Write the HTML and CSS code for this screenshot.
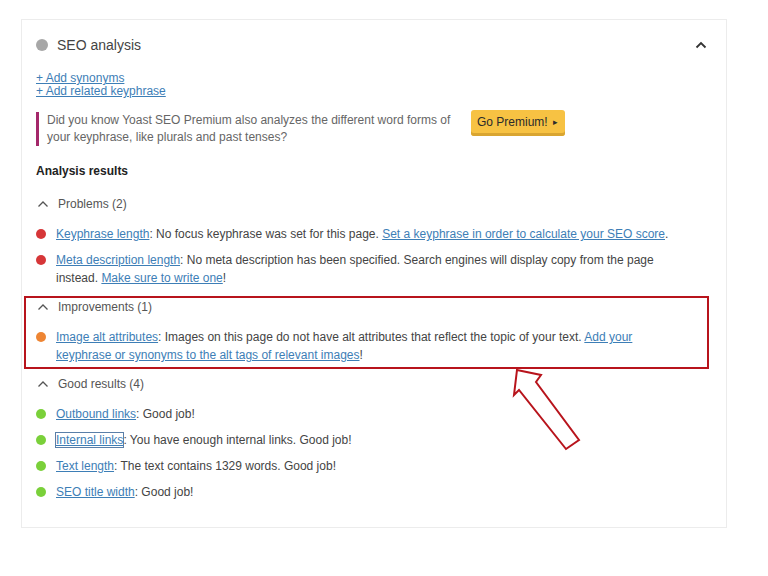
FILE: index.html
```html
<!DOCTYPE html>
<html>
<head>
<meta charset="utf-8">
<link rel="stylesheet" href="styles.css">
</head>
<body>
<div class="panel">
  <div class="panel-head">
    <span class="dot dot-grey big"></span>
    <span class="panel-title">SEO analysis</span>
    <svg class="chev-big" width="14" height="10" viewBox="0 0 14 10"><path d="M2.5 7.5 L7 3 L11.5 7.5" fill="none" stroke="#333" stroke-width="1.8"/></svg>
  </div>
  <div class="add-links">
    <a href="#">+ Add synonyms</a>
    <a href="#">+ Add related keyphrase</a>
  </div>
  <div class="upsell">
    <p class="upsell-text">Did you know Yoast SEO Premium also analyzes the different word forms of your keyphrase, like plurals and past tenses?</p>
    <span class="btn-premium">Go Premium! <span class="caret">&#9656;</span></span>
  </div>
  <h3 class="results-title">Analysis results</h3>

  <section class="group">
    <div class="group-head"><svg class="chev" width="12" height="8" viewBox="0 0 12 8"><path d="M1.5 6.5 L6 2 L10.5 6.5" fill="none" stroke="#555" stroke-width="1.3"/></svg>Problems (2)</div>
    <ul class="items">
      <li><span class="dot dot-red"></span><p><a href="#">Keyphrase length</a>: No focus keyphrase was set for this page. <a href="#">Set a keyphrase in order to calculate your SEO score</a>.</p></li>
      <li><span class="dot dot-red"></span><p><a href="#">Meta description length</a>: No meta description has been specified. Search engines will display copy from the page instead. <a href="#">Make sure to write one</a>!</p></li>
    </ul>
  </section>

  <section class="group">
    <div class="group-head"><svg class="chev" width="12" height="8" viewBox="0 0 12 8"><path d="M1.5 6.5 L6 2 L10.5 6.5" fill="none" stroke="#555" stroke-width="1.3"/></svg>Improvements (1)</div>
    <ul class="items">
      <li><span class="dot dot-orange"></span><p><a href="#">Image alt attributes</a>: Images on this page do not have alt attributes that reflect the topic of your text. <a href="#">Add your keyphrase or synonyms to the alt tags of relevant images</a>!</p></li>
    </ul>
  </section>

  <section class="group">
    <div class="group-head"><svg class="chev" width="12" height="8" viewBox="0 0 12 8"><path d="M1.5 6.5 L6 2 L10.5 6.5" fill="none" stroke="#555" stroke-width="1.3"/></svg>Good results (4)</div>
    <ul class="items">
      <li><span class="dot dot-green"></span><p><a href="#">Outbound links</a>: Good job!</p></li>
      <li><span class="dot dot-green"></span><p><a href="#" class="focused">Internal links</a>: You have enough internal links. Good job!</p></li>
      <li><span class="dot dot-green"></span><p><a href="#">Text length</a>: The text contains 1329 words. Good job!</p></li>
      <li><span class="dot dot-green"></span><p><a href="#">SEO title width</a>: Good job!</p></li>
    </ul>
  </section>
</div>

<div class="highlight"></div>
<svg class="arrow" width="768" height="576" viewBox="0 0 768 576">
  <polygon points="517,370 541,375 536,382 579,440 566,449 519,390 514,395" fill="#fff" stroke="#b8141c" stroke-width="2" stroke-linejoin="miter"/>
</svg>
</body>
</html>
```
FILE: styles.css
```css
* { box-sizing: border-box; }
html, body { margin: 0; padding: 0; background: #fff; }
body {
  font-family: "Liberation Sans", Arial, sans-serif;
  color: #444;
  font-size: 12px;
  position: relative;
  width: 768px;
  height: 576px;
  overflow: hidden;
}
a { color: #3d7eb6; text-decoration: underline; }

.panel {
  margin: 19px 0 0 21px;
  width: 706px;
  height: 509px;
  border: 1px solid #ececec;
  padding: 13px 16px 0 14px;
}
.panel-head {
  display: flex;
  align-items: center;
  height: 24px;
}
.panel-title {
  font-size: 14px;
  color: #444;
  margin-left: 9px;
  flex: 1;
}
.chev-big { margin-right: 2px; }

.dot { display: inline-block; border-radius: 50%; width: 10px; height: 10px; flex: none; }
.dot.big { width: 12px; height: 12px; margin-left: 0; }
.dot-grey { background: #a7a7a7; }
.dot-red { background: #d63638; }
.dot-orange { background: #ee8533; }
.dot-green { background: #7ad03a; }

.add-links {
  margin-top: 15px;
  display: flex;
  flex-direction: column;
  line-height: 13px;
  font-size: 12px;
}
.add-links a { width: fit-content; }

.upsell {
  margin-top: 14px;
  display: flex;
  align-items: flex-start;
  gap: 11px;
}
.upsell-text {
  margin: 0;
  border-left: 3px solid #a4286a;
  padding-left: 8px;
  width: 424px;
  line-height: 17px;
  color: #666;
}
.btn-premium {
  margin-top: -2px;
  display: inline-flex;
  align-items: center;
  gap: 5px;
  height: 26px;
  padding: 0 7px 2px 6px;
  background: #f7c243;
  border-radius: 3px;
  box-shadow: inset 0 -3px 0 #d9a531;
  color: #2b2b2b;
  font-size: 12px;
}
.caret { font-size: 9px; }

.results-title {
  margin: 16px 0 15px;
  font-size: 12px;
  line-height: 18px;
  color: #222;
  font-weight: bold;
}

.group { display: flex; flex-direction: column; gap: 12px; margin-bottom: 11px; }
.group-head {
  display: flex;
  align-items: center;
  gap: 9px;
  line-height: 18px;
  color: #555;
}
.chev { margin-left: 1px; }
.items { list-style: none; margin: 0; padding: 0; display: flex; flex-direction: column; gap: 8px; }
.items li { display: flex; align-items: flex-start; gap: 10px; }
.items li .dot { margin-top: 4px; margin-left: 0; }
.items p { margin: 0; line-height: 18px; width: 630px; }
.focused { outline: 1px solid #5a7fa8; color: #3d7eb6; }

.highlight {
  position: absolute;
  left: 24px;
  top: 296px;
  width: 685px;
  height: 73px;
  border: 2px solid #b8141c;
}
.arrow { position: absolute; left: 0; top: 0; pointer-events: none; }
```
